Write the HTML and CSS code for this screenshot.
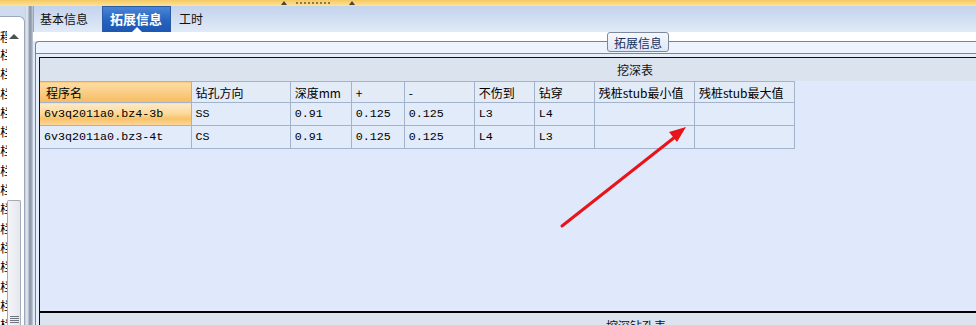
FILE: index.html
```html
<!DOCTYPE html>
<html lang="zh-CN">

<head>
    <meta charset="UTF-8">
    <title>拓展信息</title>
    <link rel="stylesheet" href="styles.css">
</head>

<body>
    <div class="topstrip">
        <span class="grip-arrow"></span>
        <span class="grip-dots"></span>
        <span class="grip-arrow"></span>
    </div>

    <div class="frame">
        <aside class="side">
            <div class="side-panel">
                <div class="side-col">
                    <div class="side-head">程</div>
                    <div class="side-row">栏</div>
                    <div class="side-row">栏</div>
                    <div class="side-row">栏</div>
                    <div class="side-row">栏</div>
                    <div class="side-row">栏</div>
                    <div class="side-row">栏</div>
                    <div class="side-row">栏</div>
                    <div class="side-row">栏</div>
                    <div class="side-row">栏</div>
                    <div class="side-row">栏</div>
                    <div class="side-row">栏</div>
                    <div class="side-row">栏</div>
                    <div class="side-row">栏</div>
                    <div class="side-row">栏</div>
                    <div class="side-row">栏</div>
                </div>
                <div class="scroll">
                    <div class="scroll-up"><span class="up-glyph"></span></div>
                    <div class="scroll-thumb"><span class="thumb-grip"></span></div>
                </div>
            </div>
        </aside>

        <div class="splitter"></div>

        <section class="content">
            <nav class="tabs">
                <a href="#" class="tab">基本信息</a>
                <a href="#" class="tab active">拓展信息</a>
                <a href="#" class="tab last">工时</a>
            </nav>
            <div class="page-gap"></div>

            <div class="group">
                <div class="group-top">
                    <span class="legend">拓展信息</span>
                </div>
                <div class="inner">
                    <div class="grid-box">
                        <div class="caption">挖深表</div>
                        <table class="grid">
                            <colgroup>
                                <col style="width: 151px">
                                <col style="width: 99px">
                                <col style="width: 61px">
                                <col style="width: 53px">
                                <col style="width: 70px">
                                <col style="width: 60px">
                                <col style="width: 60px">
                                <col style="width: 100px">
                                <col style="width: 100px">
                            </colgroup>
                            <thead>
                                <tr>
                                    <th class="sorted">程序名</th>
                                    <th>钻孔方向</th>
                                    <th>深度mm</th>
                                    <th>+</th>
                                    <th>-</th>
                                    <th>不伤到</th>
                                    <th>钻穿</th>
                                    <th>残桩stub最小值</th>
                                    <th>残桩stub最大值</th>
                                </tr>
                            </thead>
                            <tbody>
                                <tr>
                                    <td class="current">6v3q2011a0.bz4-3b</td>
                                    <td>SS</td>
                                    <td>0.91</td>
                                    <td>0.125</td>
                                    <td>0.125</td>
                                    <td>L3</td>
                                    <td>L4</td>
                                    <td></td>
                                    <td></td>
                                </tr>
                                <tr>
                                    <td>6v3q2011a0.bz3-4t</td>
                                    <td>CS</td>
                                    <td>0.91</td>
                                    <td>0.125</td>
                                    <td>0.125</td>
                                    <td>L4</td>
                                    <td>L3</td>
                                    <td></td>
                                    <td></td>
                                </tr>
                            </tbody>
                        </table>
                        <div class="grid-fill"></div>
                        <div class="caption second">挖深钻孔表</div>
                    </div>
                </div>
            </div>
        </section>
    </div>

    <!-- red annotation arrow drawn over the screenshot -->
    <svg class="arrow" width="976" height="325" viewBox="0 0 976 325">
        <line x1="562" y1="226" x2="675" y2="137" stroke="#e8141a" stroke-width="3" stroke-linecap="round"/>
        <polygon points="686,127 677,142 669,132" fill="#e8141a"/>
    </svg>
</body>

</html>
```

FILE: styles.css
```css
:root {
    --grid-line: #a3b3cb;
    --grid-bg: #dfe9fb;
    --caption-bg: #dbe3ef;
    --head-bg: #e3ebf7;
    --frame-line: #76839a;
}

* {
    margin: 0;
    padding: 0;
    box-sizing: border-box;
}

body {
    position: relative;
    width: 976px;
    height: 325px;
    overflow: hidden;
    font-family: "Noto Sans CJK SC", sans-serif;
    font-size: 12px;
    color: #000;
    background-color: #dfe9fb;
}

/* top splitter strip */
.topstrip {
    height: 6px;
    display: flex;
    align-items: center;
    padding-left: 281px;
    background: linear-gradient(#f5c965, #fde398);
}

.grip-arrow {
    width: 0;
    height: 0;
    border-left: 3px solid transparent;
    border-right: 3px solid transparent;
    border-bottom: 4px solid #4a4636;
}

.grip-dots {
    width: 34px;
    height: 2px;
    margin: 0 19px 0 9px;
    background: repeating-linear-gradient(90deg, #8a7a4e 0 2px, transparent 2px 4px);
}

.frame {
    display: flex;
    height: 319px;
    overflow: hidden;
}

/* left list */
.side {
    width: 25px;
    flex-shrink: 0;
    padding-top: 10px;
    background: linear-gradient(#cfdbee, #dce5f3);
}

.side-panel {
    height: 100%;
    display: flex;
    background-color: #fff;
    border-top: 1px solid #9ca8ba;
    border-right: 1px solid #9ca8ba;
    border-top-right-radius: 6px;
    padding-right: 3px;
}

.side-col {
    width: 7px;
    overflow: hidden;
    padding-top: 12px;
}

.side-head,
.side-row {
    line-height: 19.3px;
    font-size: 12px;
    white-space: nowrap;
}

.side-head {
    line-height: 16px;
}

.scroll {
    width: 14px;
    display: flex;
    flex-direction: column;
    padding-top: 11px;
}

.scroll-up {
    height: 16px;
    display: flex;
    align-items: center;
    justify-content: center;
}

.up-glyph {
    width: 0;
    height: 0;
    border-left: 5px solid transparent;
    border-right: 5px solid transparent;
    border-bottom: 5px solid #4b4f57;
}

.scroll-thumb {
    margin-top: 156px;
    flex-grow: 1;
    display: flex;
    align-items: flex-end;
    justify-content: center;
    padding-bottom: 1px;
    background: linear-gradient(90deg, #f4f5f8, #e4e7ed);
    border: 1px solid #a4abb6;
    border-bottom: none;
    border-radius: 2px 2px 0 0;
}

.thumb-grip {
    width: 9px;
    height: 8px;
    background: repeating-linear-gradient(#6f7580 0 1px, transparent 1px 2px);
}

.splitter {
    width: 8px;
    flex-shrink: 0;
    background: linear-gradient(90deg, #c3c9d3 0, #e8ecf2 25%, #c2cad6 40%, #8793a5 60%, #9aa5b5 80%, #c7d0dc 100%);
}

/* right side */
.content {
    flex-grow: 1;
    display: flex;
    flex-direction: column;
    min-width: 0;
}

.tabs {
    height: 26px;
    flex-shrink: 0;
    display: flex;
    align-items: stretch;
    background: linear-gradient(#c3d3ed, #e1eaf7);
    border-left: 1px solid #9aa6b8;
}

.tab {
    display: flex;
    align-items: center;
    padding: 0 6px 2px;
    color: #111;
    text-decoration: none;
    font-size: 12px;
}

.tab.active {
    position: relative;
    margin-left: 8px;
    padding: 0 8px 2px 7px;
    color: #fff;
    font-weight: bold;
    font-size: 13px;
    background: linear-gradient(#4a86d6, #2563bf 55%, #1d57b0);
    border: 1px solid #2a5aa5;
    border-bottom: none;
}

/* caret under the selected tab */
.tab.active::after {
    content: "";
    position: absolute;
    left: 50%;
    bottom: 0;
    margin-left: -5px;
    border-left: 5px solid transparent;
    border-right: 5px solid transparent;
    border-bottom: 5px solid #fff;
}

.tab.last {
    margin-left: 2px;
}

.page-gap {
    height: 9px;
    flex-shrink: 0;
    background-color: #fff;
}

.group {
    flex-shrink: 0;
    display: flex;
    flex-direction: column;
    margin-left: 2px;
    border-top: 1px solid var(--frame-line);
    border-left: 1px solid var(--frame-line);
    border-top-left-radius: 4px;
    background-color: #eef4fe;
}

.group-top {
    height: 11px;
    display: flex;
}

.legend {
    height: 20px;
    margin: -10px 0 0 571px;
    padding: 0 6px;
    display: flex;
    align-items: center;
    color: #15305f;
    font-size: 12px;
    background: linear-gradient(#f5f8fd, #dfe7f4);
    border: 1px solid #7d889a;
    border-radius: 3px;
}

.inner {
    display: flex;
    flex-direction: column;
    padding: 3px 0 0 3px;
    border-top: 1px solid #7a8799;
    background-color: #e6eefa;
}

.grid-box {
    display: flex;
    flex-direction: column;
    border-top: 1px solid #111;
    border-left: 1px solid #111;
    background-color: var(--grid-bg);
}

.caption {
    height: 23px;
    flex-shrink: 0;
    padding-left: 577px;
    display: flex;
    align-items: center;
    background-color: var(--caption-bg);
    color: #111;
}

.caption.second {
    align-items: flex-start;
    padding: 4px 0 0 566px;
    border-top: 2px solid #000;
    background-color: #dce3ee;
}

.grid {
    width: 755px;
    table-layout: fixed;
    border-collapse: collapse;
    flex-shrink: 0;
}

.grid th,
.grid td {
    border: 1px solid var(--grid-line);
    padding: 0 4px;
    text-align: left;
    white-space: nowrap;
    overflow: hidden;
}

.grid th {
    height: 21px;
    font-weight: normal;
    background-color: var(--head-bg);
}

.grid td {
    height: 23px;
    font-family: "Liberation Mono", "Noto Sans CJK SC", monospace;
    font-size: 11.7px;
    background-color: #e1ebfa;
}

.grid tr > :first-child {
    border-left: none;
}

.grid th.sorted {
    padding-left: 6px;
    background: linear-gradient(#fcdca6, #f9cd83 50%, #f6bb5e);
}

.grid td.current {
    background: linear-gradient(#fde9c9, #fcd99b 45%, #f8c267 70%, #fbd9a0);
}

.grid-fill {
    height: 162px;
    flex-shrink: 0;
}

.arrow {
    position: absolute;
    left: 0;
    top: 0;
    pointer-events: none;
}
```
